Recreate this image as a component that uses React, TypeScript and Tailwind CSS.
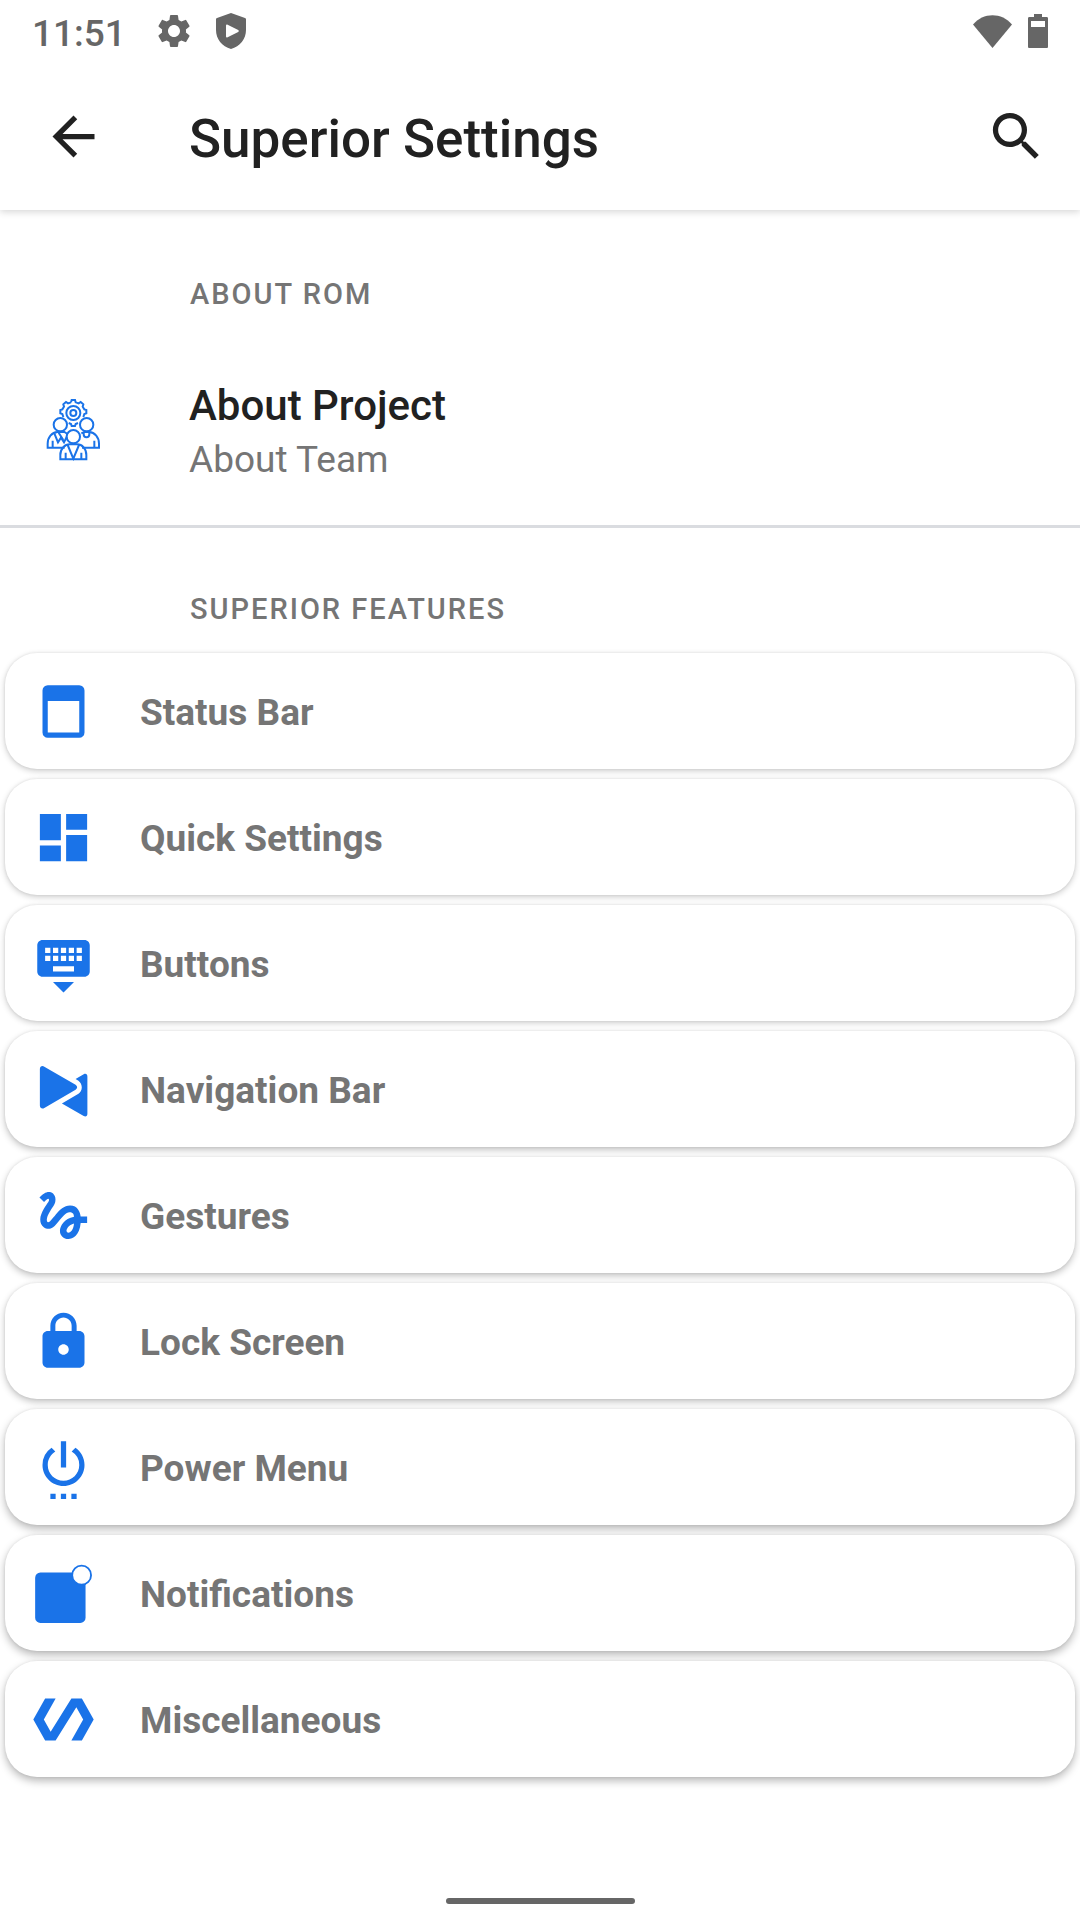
import type React from "react"
import {
  MdArrowBack,
  MdDashboard,
  MdGesture,
  MdKeyboardHide,
  MdLock,
  MdPolymer,
  MdSearch,
  MdSettings,
  MdSettingsPower,
} from "react-icons/md"

interface FeatureItem {
  id: string
  title: string
  icon: React.ReactNode
  shadow: string
}

const ICON_SIZE = 63

// Elevation gets a bit stronger towards the bottom of the screen
const SHADOW_LOW = "shadow-[0_2px_6px_rgba(0,0,0,0.20),0_0_3px_rgba(0,0,0,0.08)]"
const SHADOW_MID = "shadow-[0_3px_7px_rgba(0,0,0,0.24),0_0_3px_rgba(0,0,0,0.08)]"
const SHADOW_HIGH = "shadow-[0_4px_8px_rgba(0,0,0,0.28),0_0_3px_rgba(0,0,0,0.08)]"

const StatusBarIcon = () => (
  <svg width={ICON_SIZE} height={ICON_SIZE} viewBox="0 0 24 24" fill="currentColor" fillRule="evenodd">
    <path d="M6 2h12a2 2 0 0 1 2 2v16a2 2 0 0 1-2 2H6a2 2 0 0 1-2-2V4a2 2 0 0 1 2-2zM6 8v12h12V8z" />
  </svg>
)

const NavigationBarIcon = () => (
  <svg width={ICON_SIZE} height={ICON_SIZE} viewBox="0 0 24 24" fill="currentColor">
    <path d="M3 4.2c0-1 .9-1.4 1.7-.9l11.9 6.9c.8.5.8 1.4 0 1.9L4.7 19c-.8.5-1.7.1-1.7-.9z" />
    <path d="M16.6 8l3.1-1.8c.8-.4 1.4 0 1.4.8v14.2c0 .9-.6 1.3-1.4.9l-8.3-4.8 6.3-3.7c1.7-1 1.7-3.6 0-4.9z" />
  </svg>
)

const NotificationsIcon = () => (
  <svg width={ICON_SIZE} height={ICON_SIZE} viewBox="0 0 24 24" fill="currentColor">
    <rect x="1.2" y="4" width="19.2" height="19.2" rx="2" />
    <circle cx="18.9" cy="5" r="3.6" fill="white" stroke="currentColor" strokeWidth="0.7" />
  </svg>
)

const TeamIcon = () => (
  <svg width="57" height="63" viewBox="75 80 171 189" fill="none" stroke="currentColor" strokeWidth="6">
    {/* Engranaje */}
    <path d="M153 93l2-7h10l2 7 9 3 6-4 8 7-2 7 5 8 6 2v10l-6 2-3 9 M153 93l-9 3-6-4-8 7 2 7-5 8-6 2v10l6 2 3 9 M146 155l7 3 2 6h10l2-6 7-3" />
    <circle cx="160" cy="125" r="21" />
    <circle cx="160" cy="125" r="9" />
    {/* Personas */}
    <circle cx="121" cy="160" r="20" />
    <circle cx="200" cy="160" r="20" />
    <circle cx="160" cy="196" r="20" />
    <path d="M134 229H83v-12c0-19 12-34 30-35h20l10 6M186 229h51v-12c0-19-12-34-30-35h-14l-9 4M98 229v-21M223 229v-21" />
    <path d="M103 186l11 27 9-14 9 14 8-16M116 184l14 22M191 182v7c0 12 17 12 17 0v-7" />
    <path d="M121 264v-13c0-19 14-32 28-32h22c16 0 28 13 28 32v13zM143 221l17 41 17-41M137 264v-20M184 264v-20" />
  </svg>
)

const features: FeatureItem[] = [
  { id: "status-bar", title: "Status Bar", icon: <StatusBarIcon />, shadow: SHADOW_LOW },
  { id: "quick-settings", title: "Quick Settings", icon: <MdDashboard size={ICON_SIZE} />, shadow: SHADOW_LOW },
  { id: "buttons", title: "Buttons", icon: <MdKeyboardHide size={ICON_SIZE} />, shadow: SHADOW_LOW },
  { id: "navigation-bar", title: "Navigation Bar", icon: <NavigationBarIcon />, shadow: SHADOW_MID },
  { id: "gestures", title: "Gestures", icon: <MdGesture size={ICON_SIZE} />, shadow: SHADOW_MID },
  { id: "lock-screen", title: "Lock Screen", icon: <MdLock size={ICON_SIZE} />, shadow: SHADOW_MID },
  { id: "power-menu", title: "Power Menu", icon: <MdSettingsPower size={ICON_SIZE} />, shadow: SHADOW_HIGH },
  { id: "notifications", title: "Notifications", icon: <NotificationsIcon />, shadow: SHADOW_HIGH },
  { id: "miscellaneous", title: "Miscellaneous", icon: <MdPolymer size={ICON_SIZE} />, shadow: SHADOW_HIGH },
]

const SystemBar = () => (
  <div className="flex h-[62px] items-center justify-between px-8 text-[#666666]">
    <div className="flex items-center">
      <span className="pt-1.5 text-[37px] leading-10 font-medium">11:51</span>
      <MdSettings size={40} className="ml-7" />
      <svg className="ml-[22px]" width="30" height="36" viewBox="0 0 30 36" fill="currentColor" fillRule="evenodd">
        <path d="M15 0l14 5c.7.3 1 .7 1 1.5V17c0 9-6 16.5-15 19C6 33.5 0 26 0 17V6.5C0 5.7.3 5.3 1 5zM10 12.5v11c0 1 .8 1.3 1.6.8l10.6-5.400c.8-.5.8-1.300 0-1.800l-10.600-5.400c-.8-.5-1.600-.2-1.600.8z" />
      </svg>
    </div>
    <div className="flex items-center gap-4">
      <svg width="39" height="33" viewBox="0 0 39 33" fill="currentColor">
        <path d="M0 9.5C10-3 29-3 39 9.5L19.5 33z" />
      </svg>
      <svg width="20" height="34" viewBox="0 0 20 34" fill="currentColor" fillRule="evenodd">
        <path d="M6 0h8v3h4.500c1 0 1.500.5 1.500 1.500v28c0 1-.5 1.500-1.500 1.500h-17C.5 34 0 33.500 0 32.500v-28C0 3.500.5 3 1.500 3H6zM3 7v6h14V7z" />
      </svg>
    </div>
  </div>
)

const SectionTitle = ({ children }: { children: React.ReactNode }) => (
  <h2 className="pl-[190px] text-[29px] leading-10 font-medium tracking-[2px] text-[#757575] uppercase">{children}</h2>
)

const FeatureCard = ({ item }: { item: FeatureItem }) => (
  <button
    type="button"
    className={`flex h-[116px] w-full items-center gap-[45px] rounded-[32px] bg-white pl-[27px] text-left ${item.shadow}`}
  >
    <span className="shrink-0 text-[#1a73e8]">{item.icon}</span>
    <span className="pt-1 text-[37px] leading-10 font-bold text-[#757575]">{item.title}</span>
  </button>
)

const App: React.FC = () => {
  return (
    <div className="flex min-h-screen flex-col bg-white font-['Roboto',sans-serif]">
      <header className="bg-white shadow-[0_2px_7px_rgba(0,0,0,0.16)]">
        <SystemBar />
        <div className="flex h-[148px] items-center pr-8 pl-[42px] text-[#212121]">
          <button type="button" aria-label="Back">
            <MdArrowBack size={ICON_SIZE} />
          </button>
          <h1 className="ml-[84px] flex-1 pt-1.5 text-[53px] leading-16 font-medium">Superior Settings</h1>
          <button type="button" aria-label="Search">
            <MdSearch size={ICON_SIZE} />
          </button>
        </div>
      </header>

      <main>
        <section className="border-b-3 border-[#dadce0] pt-16">
          <SectionTitle>About ROM</SectionTitle>
          <button type="button" className="mt-[57px] mb-[38px] flex w-full items-center gap-[87px] pl-[45px] text-left">
            <span className="text-[#1a73e8]">
              <TeamIcon />
            </span>
            <span className="flex flex-col pt-2">
              <span className="text-[42px] leading-[54px] font-medium text-[#212121]">About Project</span>
              <span className="text-[37px] leading-[54px] text-[#757575]">About Team</span>
            </span>
          </button>
        </section>

        <section className="pt-[61px]">
          <SectionTitle>Superior Features</SectionTitle>
          <ul className="mt-6 flex flex-col gap-[10px] px-[5px]">
            {features.map((item) => (
              <li key={item.id}>
                <FeatureCard item={item} />
              </li>
            ))}
          </ul>
        </section>
      </main>

      {/* Indicador de inicio */}
      <footer className="mt-auto flex justify-center py-4">
        <div className="h-[6px] w-[189px] rounded-full bg-[#666666]" />
      </footer>
    </div>
  )
}

export default App
